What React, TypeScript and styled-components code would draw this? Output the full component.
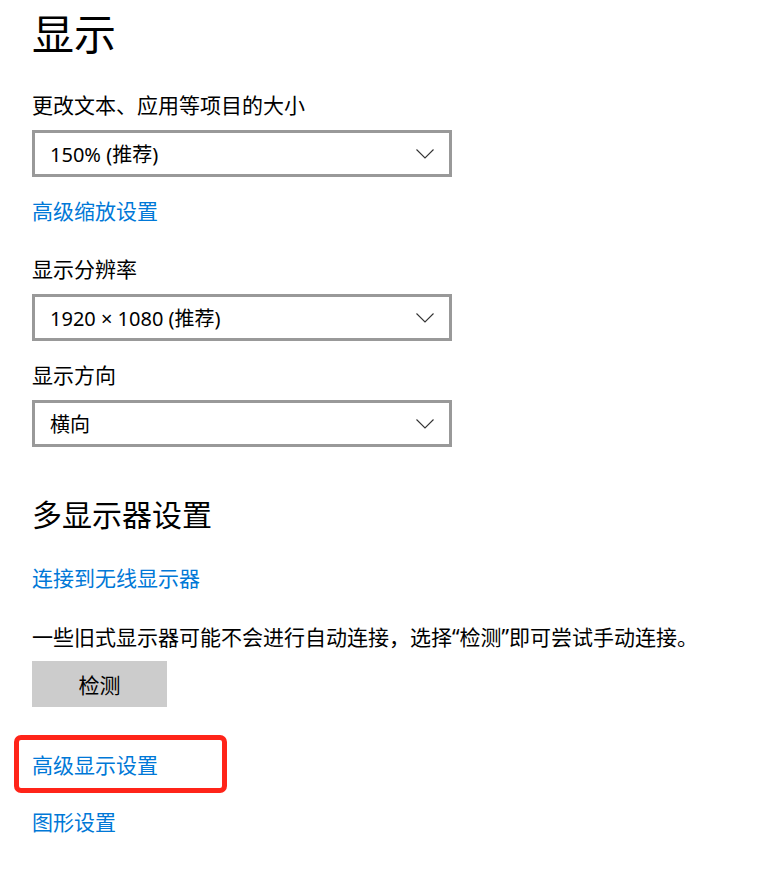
import React from "react";
import styled, { createGlobalStyle } from "styled-components";

const GlobalStyle = createGlobalStyle`
  html, body {
    margin: 0;
    padding: 0;
    background: #ffffff;
  }
  body {
    font-family: "Noto Sans", "Noto Sans CJK SC", sans-serif;
    color: #000000;
  }
`;

const Page = styled.div`
  display: flex;
  flex-direction: column;
  align-items: flex-start;
  padding: 12px 32px 40px;
  width: 772px;
  box-sizing: border-box;
`;

const Title = styled.h1`
  margin: 0;
  font-size: 42px;
  line-height: 44px;
  font-weight: 400;
`;

const SubTitle = styled.h2<{ $top: number }>`
  margin: ${(p) => p.$top}px 0 0;
  font-size: 30px;
  line-height: 40px;
  font-weight: 400;
`;

const Label = styled.div<{ $top: number }>`
  margin-top: ${(p) => p.$top}px;
  font-size: 21px;
  line-height: 28px;
`;

const Link = styled.a<{ $top?: number }>`
  display: block;
  margin-top: ${(p) => p.$top ?? 0}px;
  font-size: 21px;
  line-height: 28px;
  color: #0078d7;
  text-decoration: none;
  cursor: pointer;
`;

const Select = styled.div<{ $top: number }>`
  display: flex;
  align-items: center;
  justify-content: space-between;
  margin-top: ${(p) => p.$top}px;
  width: 420px;
  height: 47px;
  box-sizing: border-box;
  border: 3px solid #999999;
  padding: 0 14px 0 15px;
  font-size: 20px;
  background: #ffffff;
`;

const Chevron = () => (
  <svg width="20" height="11" viewBox="0 0 20 11" fill="none">
    <path d="M1.5 1.5 L10 10 L18.5 1.5" stroke="#333" strokeWidth="1.1" />
  </svg>
);

const Button = styled.button`
  margin-top: 10px;
  width: 135px;
  height: 46px;
  border: none;
  background: #cccccc;
  font-family: inherit;
  font-size: 21px;
  color: #000;
  padding: 0;
`;

const Highlight = styled.div`
  margin: 28px 0 0 -18px;
  width: 213px;
  height: 58px;
  box-sizing: border-box;
  border: 5px solid #ff2419;
  border-radius: 7px;
  padding: 11px 0 0 13px;
`;

export default function App() {
  return (
    <>
      <GlobalStyle />
      <Page>
        <Title>显示</Title>
        <Label $top={35}>更改文本、应用等项目的大小</Label>
        <Select $top={11}>
          <span>150% (推荐)</span>
          <Chevron />
        </Select>
        <Link $top={20}>高级缩放设置</Link>
        <Label $top={30}>显示分辨率</Label>
        <Select $top={11}>
          <span>1920 × 1080 (推荐)</span>
          <Chevron />
        </Select>
        <Label $top={20}>显示方向</Label>
        <Select $top={11}>
          <span>横向</span>
          <Chevron />
        </Select>
        <SubTitle $top={48}>多显示器设置</SubTitle>
        <Link $top={29}>连接到无线显示器</Link>
        <Label $top={31}>一些旧式显示器可能不会进行自动连接，选择“检测”即可尝试手动连接。</Label>
        <Button>检测</Button>
        <Highlight>
          <Link>高级显示设置</Link>
        </Highlight>
        <Link $top={15}>图形设置</Link>
      </Page>
    </>
  );
}
